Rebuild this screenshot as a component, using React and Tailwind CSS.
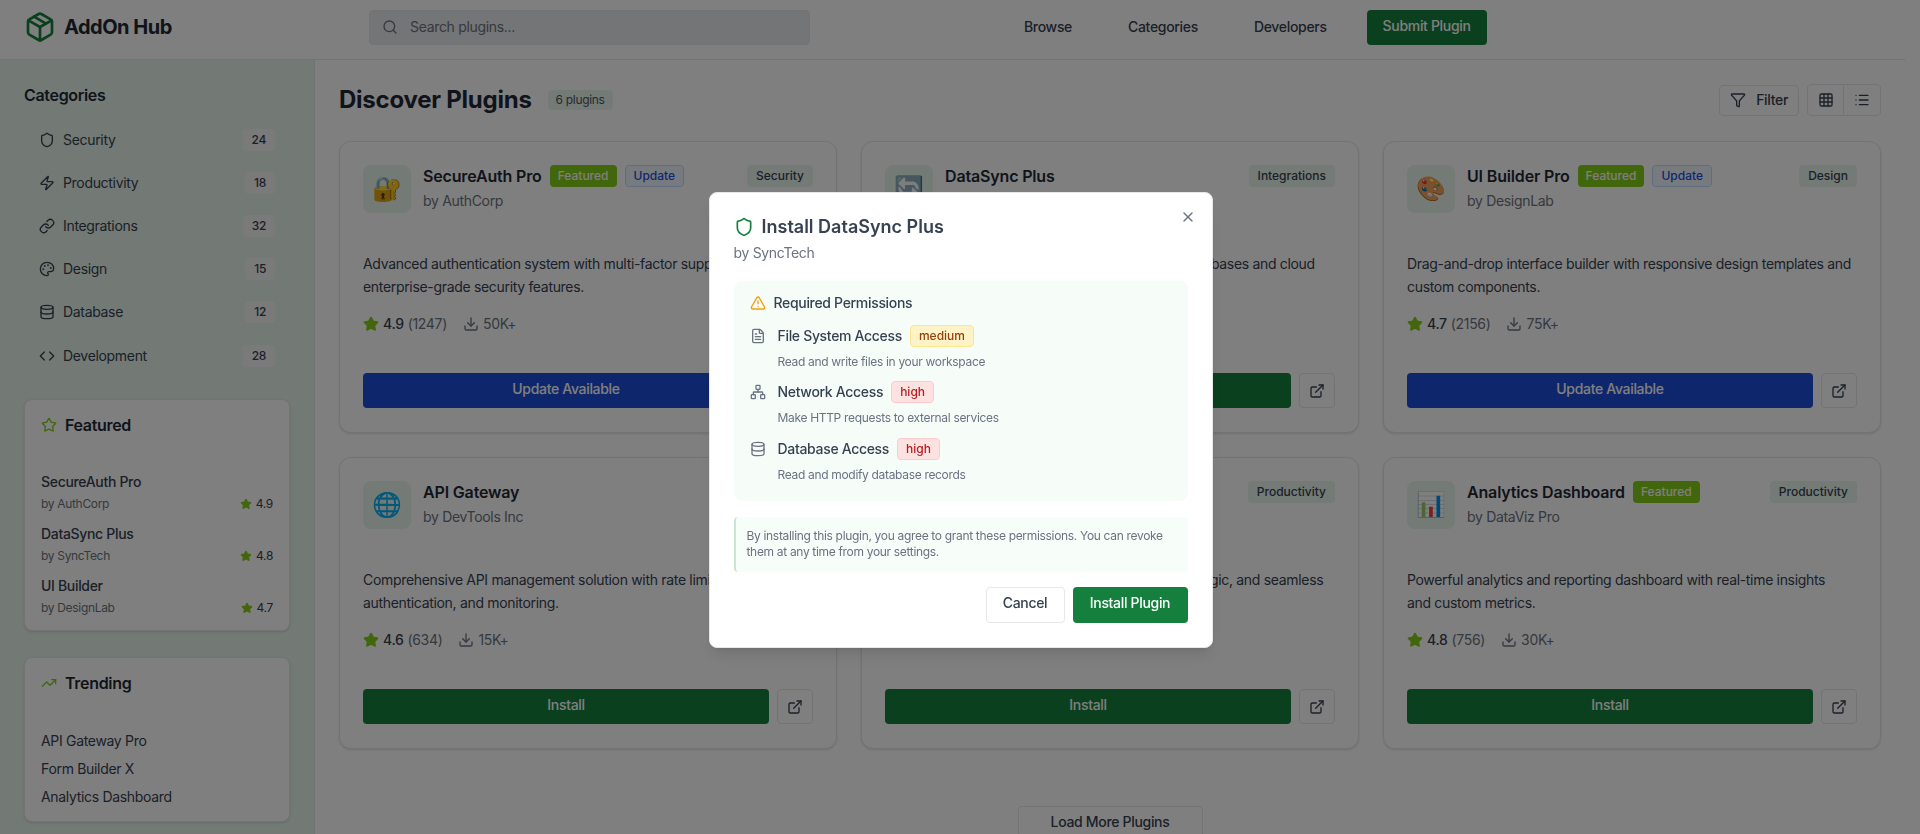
import {
  Package, Search, Shield, Zap, Link, Palette, Database, Code, Star, TrendingUp, Filter,
  Grid3x3, List, Download, ExternalLink, X, TriangleAlert, FileText, Network,
} from 'lucide-react'

const categories = [
  { name: 'Security', count: 24, icon: Shield },
  { name: 'Productivity', count: 18, icon: Zap },
  { name: 'Integrations', count: 32, icon: Link },
  { name: 'Design', count: 15, icon: Palette },
  { name: 'Database', count: 12, icon: Database },
  { name: 'Development', count: 28, icon: Code },
]

const featured = [
  { name: 'SecureAuth Pro', by: 'by AuthCorp', rating: '4.9' },
  { name: 'DataSync Plus', by: 'by SyncTech', rating: '4.8' },
  { name: 'UI Builder', by: 'by DesignLab', rating: '4.7' },
]

const plugins = [
  { name: 'SecureAuth Pro', by: 'by AuthCorp', emoji: '🔐', cat: 'Security', featured: true, update: true, rating: '4.9', reviews: '(1247)', downloads: '50K+', desc: 'Advanced authentication system with multi-factor support and enterprise-grade security features.' },
  { name: 'DataSync Plus', by: 'by SyncTech', emoji: '🔄', cat: 'Integrations', rating: '4.8', reviews: '(892)', downloads: '25K+', desc: 'Real-time data synchronization across multiple databases and cloud storage providers.' },
  { name: 'UI Builder Pro', by: 'by DesignLab', emoji: '🎨', cat: 'Design', featured: true, update: true, rating: '4.7', reviews: '(2156)', downloads: '75K+', desc: 'Drag-and-drop interface builder with responsive design templates and custom components.' },
  { name: 'API Gateway', by: 'by DevTools Inc', emoji: '🌐', cat: 'Development', rating: '4.6', reviews: '(634)', downloads: '15K+', desc: 'Comprehensive API management solution with rate limiting, authentication, and monitoring.' },
  { name: 'Form Builder X', by: 'by FormCraft', emoji: '📝', cat: 'Productivity', rating: '4.5', reviews: '(423)', downloads: '12K+', desc: 'Create complex forms with validation, conditional logic, and seamless integrations.' },
  { name: 'Analytics Dashboard', by: 'by DataViz Pro', emoji: '📊', cat: 'Productivity', featured: true, rating: '4.8', reviews: '(756)', downloads: '30K+', desc: 'Powerful analytics and reporting dashboard with real-time insights and custom metrics.' },
]

const permissions = [
  { name: 'File System Access', level: 'medium', desc: 'Read and write files in your workspace', icon: FileText },
  { name: 'Network Access', level: 'high', desc: 'Make HTTP requests to external services', icon: Network },
  { name: 'Database Access', level: 'high', desc: 'Read and modify database records', icon: Database },
]

function PluginCard({ p }) {
  return (
    <div className="h-[292px] rounded-xl border border-[#e5e7eb] bg-white p-[23px] shadow-sm">
      <div className="flex h-12 items-start">
        <div className="flex size-12 shrink-0 items-center justify-center rounded-lg bg-[#e8f5ec] text-2xl leading-none">{p.emoji}</div>
        <div className="ml-3 min-w-0">
          <div className="flex h-[22px] items-center gap-2">
            <span className="whitespace-nowrap text-base font-semibold tracking-[-0.01em] text-[#1f2937]">{p.name}</span>
            {p.featured && <span className="flex h-[22px] items-center rounded bg-[#84cc16] px-2 text-xs font-medium tracking-normal text-white">Featured</span>}
            {p.update && <span className="flex h-[22px] items-center rounded border border-[#bfdbfe] bg-[#eff6ff] px-2 text-xs font-medium tracking-normal text-[#1d4ed8]">Update</span>}
          </div>
          <div className="mt-[4px] text-sm text-[#6b7280]">{p.by}</div>
        </div>
        <span className="ml-auto flex h-[22px] items-center rounded bg-[#e8f5ec] px-[9px] pb-[1px] text-xs font-medium tracking-normal text-[#374151]">{p.cat}</span>
      </div>
      <p className="mt-[39px] max-w-[445px] text-sm leading-[23px] text-[#374151]">{p.desc}</p>
      <div className="mt-[16px] flex h-5 items-center text-sm">
        <Star className="size-4 fill-[#84cc16] text-[#84cc16]" />
        <span className="ml-1 font-medium text-[#374151]">{p.rating}</span>
        <span className="ml-1 text-[#6b7280]">{p.reviews}</span>
        <Download className="ml-4 size-4 text-[#6b7280]" />
        <span className="ml-1 text-[#6b7280]">{p.downloads}</span>
      </div>
      <div className="mt-[39px] flex gap-2">
        <button className={`h-[35px] flex-1 rounded pb-[3px] text-sm font-medium text-white ${p.update ? 'bg-[#1d4ed8]' : 'bg-[#15803d]'}`}>
          {p.update ? 'Update Available' : 'Install'}
        </button>
        <button className="flex h-[35px] w-9 items-center justify-center rounded border border-[#e5e7eb] bg-white text-[#374151]">
          <ExternalLink className="size-4" />
        </button>
      </div>
    </div>
  )
}

export default function App() {
  return (
    <div className="h-screen overflow-hidden bg-white pr-[15px] font-['Inter',sans-serif] tracking-[-0.02em] text-[#1f2937]">
      <header className="flex h-[60px] items-center border-b border-[#e5e7eb] px-6 pb-[5px]">
        <div className="flex w-[345px] items-center gap-2">
          <Package className="size-8 text-[#15803d]" />
          <span className="text-xl font-bold tracking-[-0.025em]">AddOn Hub</span>
        </div>
        <div className="flex h-[35px] w-[441px] items-center rounded border border-[#e5e7eb] bg-[#e9eaec] px-3">
          <Search className="size-4 text-[#6b7280]" />
          <span className="ml-3 text-sm text-[#6b7280]">Search plugins...</span>
        </div>
        <nav className="ml-[198px] flex items-center gap-6 text-sm font-medium text-[#374151]">
          <a className="px-4">Browse</a>
          <a className="px-4">Categories</a>
          <a className="px-4">Developers</a>
          <button className="h-[35px] rounded bg-[#15803d] px-4 pb-[2px] text-sm font-medium text-white">Submit Plugin</button>
        </nav>
      </header>

      <div className="flex h-[774px]">
        <aside className="w-[315px] shrink-0 border-r border-[#e5e7eb] bg-[#e6f3ea] px-6 pt-6">
          <h2 className="text-base font-semibold leading-[22px]">Categories</h2>
          <ul className="mt-[12px]">
            {categories.map(c => (
              <li key={c.name} className="flex h-[43.2px] items-center justify-between px-[15px]">
                <span className="flex items-center gap-2 text-sm text-[#374151]">
                  <c.icon className="size-4" />
                  {c.name}
                </span>
                <span className="flex h-[22px] items-center rounded bg-[#f5f5f7] px-[9px] text-xs font-medium text-[#374151]">{c.count}</span>
              </li>
            ))}
          </ul>

          <div className="mt-[22px] h-[232px] rounded-lg border border-[#e5e7eb] bg-white px-4 pt-[13px] shadow-sm">
            <h3 className="flex items-center gap-2 text-base font-semibold">
              <Star className="size-4 text-[#84cc16]" /> Featured
            </h3>
            <div className="mt-[35px]">
              {featured.map(f => (
                <div key={f.name} className="mb-[12px]">
                  <div className="text-sm font-medium leading-[20px] text-[#374151]">{f.name}</div>
                  <div className="mt-[4px] flex items-center justify-between text-xs text-[#6b7280]">
                    <span>{f.by}</span>
                    <span className="flex items-center gap-1 text-[#374151]">
                      <Star className="size-3 fill-[#84cc16] text-[#84cc16]" />{f.rating}
                    </span>
                  </div>
                </div>
              ))}
            </div>
          </div>

          <div className="mt-[26px] h-[165px] rounded-lg border border-[#e5e7eb] bg-white px-4 pt-[13px] shadow-sm">
            <h3 className="flex items-center gap-2 text-base font-semibold">
              <TrendingUp className="size-4 text-[#84cc16]" /> Trending
            </h3>
            <div className="mt-[36px] flex flex-col gap-2 text-sm leading-[20px] text-[#374151]">
              <div>API Gateway Pro</div>
              <div>Form Builder X</div>
              <div>Analytics Dashboard</div>
            </div>
          </div>
        </aside>

        <main className="flex-1 px-6 pt-6">
          <div className="flex h-8 items-center">
            <h1 className="text-2xl font-bold tracking-[-0.01em]">Discover Plugins</h1>
            <span className="ml-4 rounded bg-[#e8f5ec] px-2 py-[2px] text-xs text-[#4b5563]">6 plugins</span>
            <button className="ml-auto flex h-[31px] items-center gap-[10px] rounded border border-[#e5e7eb] bg-white px-[10px] text-sm font-medium text-[#374151]">
              <Filter className="size-4" /> Filter
            </button>
            <div className="ml-2 flex h-8 rounded border border-[#e5e7eb] bg-white text-[#374151]">
              <span className="flex w-9 items-center justify-center border-r border-[#e5e7eb]"><Grid3x3 className="size-4" /></span>
              <span className="flex w-9 items-center justify-center"><List className="size-4" /></span>
            </div>
          </div>

          <div className="mt-[25px] grid grid-cols-3 gap-6">
            {plugins.map(p => <PluginCard key={p.name} p={p} />)}
          </div>

          <div className="mt-[57px] flex justify-center">
            <button className="h-[31px] w-[185px] rounded border border-[#e5e7eb] bg-white text-sm font-medium text-[#374151]">Load More Plugins</button>
          </div>
        </main>
      </div>

      <div className="fixed inset-0 flex items-center justify-center bg-black/50 pl-[1px] pt-[5px]">
        <div className="relative w-[504px] rounded-lg border border-[#e5e7eb] bg-white p-6 shadow-lg">
          <X className="absolute right-[16px] top-[16px] size-4 text-[#6b7280]" />
          <h2 className="-mt-[2px] flex items-center gap-2 text-lg font-semibold leading-[24px] tracking-normal text-[#374151]">
            <Shield className="size-5 text-[#15803d]" /> Install DataSync Plus
          </h2>
          <p className="mt-[4px] text-sm text-[#6b7280]">by SyncTech</p>

          <div className="mt-[18px] h-[220px] rounded-lg bg-[#f6fdf9] px-4 pt-3">
            <div className="flex items-center gap-2 text-sm font-medium text-[#374151]">
              <TriangleAlert className="size-4 text-[#f59e0b]" /> Required Permissions
            </div>
            <div className="mt-[12px]">
              {permissions.map(perm => (
                <div key={perm.name} className="flex h-[56.5px] gap-3">
                  <perm.icon className="mt-[3px] size-4 shrink-0 text-[#6b7280]" />
                  <div>
                    <div className="flex h-[22px] items-center gap-2">
                      <span className="text-sm font-medium text-[#374151]">{perm.name}</span>
                      <span className={`flex h-[22px] items-center rounded border px-2 text-xs font-medium tracking-normal ${perm.level === 'medium' ? 'border-[#fde68a] bg-[#fef3c7] text-[#92400e]' : 'border-[#fecaca] bg-[#fee2e2] text-[#b91c1c]'}`}>{perm.level}</span>
                    </div>
                    <div className="mt-[7px] text-xs text-[#6b7280]">{perm.desc}</div>
                  </div>
                </div>
              ))}
            </div>
          </div>

          <div className="mt-4 h-[55px] rounded border-l-2 border-[#c8e6d2] bg-[#f7fdf9] p-[11px] text-xs leading-4 text-[#6b7280]">
            By installing this plugin, you agree to grant these permissions. You can revoke them at any time from your settings.
          </div>

          <div className="mt-[15px] flex justify-end gap-2">
            <button className="h-9 w-[79px] rounded border border-[#e5e7eb] bg-white pb-[3px] text-sm font-medium text-[#374151]">Cancel</button>
            <button className="h-9 w-[115px] rounded bg-[#15803d] pb-[3px] text-sm font-medium text-white">Install Plugin</button>
          </div>
        </div>
      </div>
    </div>
  )
}
